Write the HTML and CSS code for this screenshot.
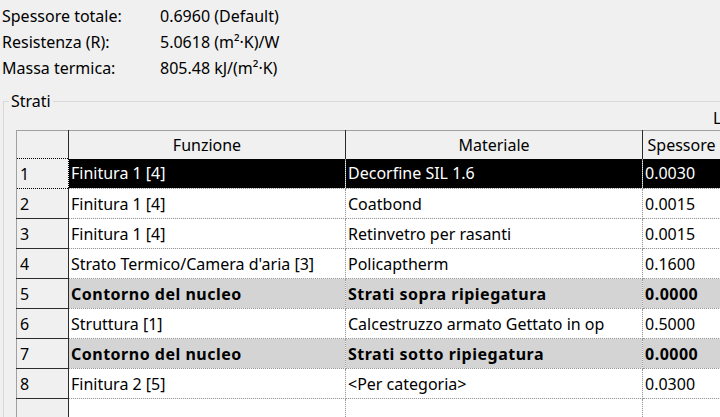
FILE: index.html
```html
<!DOCTYPE html>
<html lang="it">
<head>
  <meta charset="UTF-8" />
  <title>Struttura muro</title>
  <link rel="stylesheet" href="styles.css">
</head>
<body>

  <div class="summary">
    <span>Spessore totale:</span><span>0.6960 (Default)</span>
    <span>Resistenza (R):</span><span>5.0618 (m²·K)/W</span>
    <span>Massa termica:</span><span>805.48 kJ/(m²·K)</span>
  </div>

  <fieldset class="layers">
    <legend>Strati</legend>
    <div class="side-label">Lato esterno</div>

    <table class="grid">
      <colgroup>
        <col class="c-num">
        <col class="c-func">
        <col class="c-mat">
        <col class="c-thk">
      </colgroup>
      <thead>
        <tr>
          <th class="rowhead"></th>
          <th>Funzione</th>
          <th>Materiale</th>
          <th>Spessore</th>
        </tr>
      </thead>
      <tbody>
        <tr class="selected">
          <th class="rowhead focus">1</th>
          <td>Finitura 1 [4]</td>
          <td>Decorfine SIL 1.6</td>
          <td>0.0030</td>
        </tr>
        <tr>
          <th class="rowhead">2</th>
          <td>Finitura 1 [4]</td>
          <td>Coatbond</td>
          <td>0.0015</td>
        </tr>
        <tr>
          <th class="rowhead">3</th>
          <td>Finitura 1 [4]</td>
          <td>Retinvetro per rasanti</td>
          <td>0.0015</td>
        </tr>
        <tr>
          <th class="rowhead">4</th>
          <td>Strato Termico/Camera d'aria [3]</td>
          <td>Policaptherm</td>
          <td>0.1600</td>
        </tr>
        <tr class="core">
          <th class="rowhead">5</th>
          <td>Contorno del nucleo</td>
          <td>Strati sopra ripiegatura</td>
          <td>0.0000</td>
        </tr>
        <tr>
          <th class="rowhead">6</th>
          <td>Struttura [1]</td>
          <td>Calcestruzzo armato Gettato in op</td>
          <td>0.5000</td>
        </tr>
        <tr class="core">
          <th class="rowhead">7</th>
          <td>Contorno del nucleo</td>
          <td>Strati sotto ripiegatura</td>
          <td>0.0000</td>
        </tr>
        <tr>
          <th class="rowhead">8</th>
          <td>Finitura 2 [5]</td>
          <td>&lt;Per categoria&gt;</td>
          <td>0.0300</td>
        </tr>
        <tr>
          <th class="rowhead"></th>
          <td></td>
          <td></td>
          <td></td>
        </tr>
      </tbody>
    </table>
  </fieldset>

</body>
</html>
```

FILE: styles.css
```css
:root {
  --panel-bg: #f0f0f0;
  --grid-dark: #2b2b2b;
  --grid-dots: #9a9a9a;
  --core-bg: #d4d4d4;
}

body {
  margin: 0;
  background: var(--panel-bg);
  font-family: 'Noto Sans', 'Open Sans', sans-serif;
  font-size: 16px;
  color: #000;
  overflow: hidden;
}

.summary {
  display: grid;
  grid-template-columns: 158px auto;
  grid-auto-rows: 26px;
  align-items: center;
  padding: 3px 0 0 2px;
}

.layers {
  margin: 10px 0 0 3px;
  padding: 0 0 0 5px;
  width: 800px;
  border: 1px solid #d9d9d9;
  border-right: none;
  border-bottom: none;
}

.layers legend {
  padding: 0 2px;
  line-height: 20px;
}

.side-label {
  margin: -3px 0 0 704px;
  line-height: 20px;
  white-space: nowrap;
}

.grid {
  margin: 2px 0 0 7px;
  border-collapse: collapse;
  table-layout: fixed;
  width: 704px;
  border-top: 1px solid #a0a0a0;
  border-left: 1px solid #a0a0a0;
}

.c-num { width: 52px; }
.c-func { width: 277px; }
.c-mat { width: 297px; }
.c-thk { width: 78px; }

.grid th,
.grid td {
  padding: 0 2px;
  text-align: left;
  font-weight: normal;
  white-space: nowrap;
  overflow: hidden;
}

.grid thead th {
  height: 27px;
  background: var(--panel-bg);
  text-align: center;
  border-right: 1px solid var(--grid-dark);
  padding: 0;
}

.grid td {
  height: 29px;
  background: #fff;
  border-right: 1px dotted var(--grid-dots);
  border-bottom: 1px dotted var(--grid-dots);
}

.grid tbody .rowhead {
  height: 29px;
  padding-left: 3px;
  background: var(--panel-bg);
  border-right: 1px solid var(--grid-dark);
  border-bottom: 1px solid var(--grid-dark);
}

.grid tbody .rowhead.focus {
  border: 1px dotted #000;
}

.selected td {
  background: #000;
  color: #fff;
}

.core td {
  background: var(--core-bg);
  font-weight: bold;
  letter-spacing: 0.5px;
}
```
